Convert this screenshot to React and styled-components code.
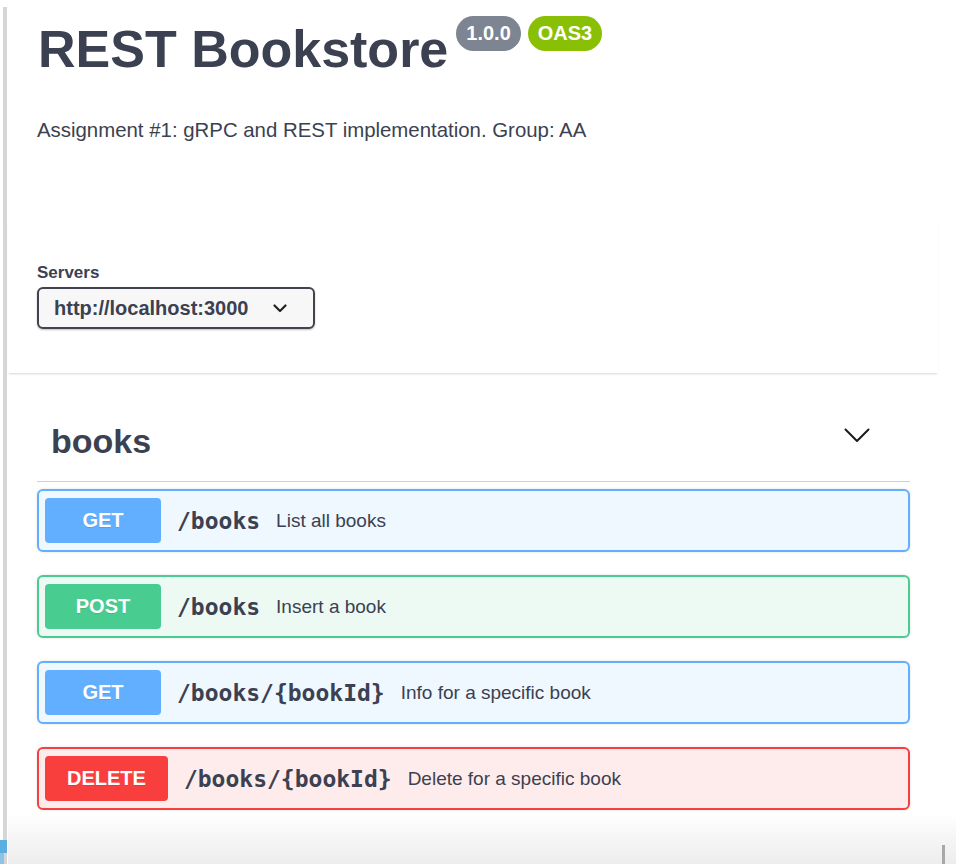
import React from "react";
import styled, { createGlobalStyle } from "styled-components";

const Global = createGlobalStyle`
  html, body { margin: 0; padding: 0; background: #fff; overflow: hidden; }
  body { font-family: "Liberation Sans", Arial, sans-serif; color: #3b4151; }
  * { box-sizing: border-box; }
`;

const Frame = styled.div`
  position: relative;
  margin: 7px 0 0 3px;
  border-left: 4px solid #d6d6d6;
  padding-left: 1px;
  min-height: 857px;
  display: flex;
  flex-direction: column;
`;

const Content = styled.div`
  width: 930px;
  display: flex;
  flex-direction: column;
`;

const Info = styled.div`
  padding: 12px 29px 0 29px;
  display: flex;
  flex-direction: column;
`;

const TitleRow = styled.div`
  display: flex;
  align-items: flex-start;
  gap: 8px;
`;

const Title = styled.h1`
  margin: 0 0 0 1px;
  font-size: 52px;
  line-height: 60px;
  font-weight: 700;
  color: #3b4151;
`;

const Badges = styled.div`
  display: flex;
  gap: 7px;
  margin-top: -3px;
`;

const Badge = styled.span`
  display: inline-block;
  height: 35px;
  line-height: 35px;
  padding: 0 10px;
  border-radius: 18px;
  background: ${(p) => p.$bg};
  color: #fff;
  font-size: 20px;
  font-weight: 700;
`;

const Description = styled.p`
  margin: 37px 0 0 0;
  font-size: 20.4px;
  line-height: 28px;
  color: #3b4151;
`;

const SchemeContainer = styled.div`
  margin-top: 76px;
  padding: 43px 29px 44px 29px;
  background: #fff;
  box-shadow: 0 2px 2px -1px rgba(0, 0, 0, 0.16);
  display: flex;
  flex-direction: column;
  gap: 4px;
`;

const Label = styled.div`
  font-size: 17px;
  line-height: 20px;
  font-weight: 700;
  color: #3b4151;
`;

const Select = styled.div`
  width: 278px;
  height: 42px;
  border: 2px solid #41444e;
  border-radius: 6px;
  background: #f7f7f7;
  box-shadow: 0 1px 2px 0 rgba(0, 0, 0, 0.25);
  display: flex;
  align-items: center;
  padding-left: 15px;
  font-size: 20px;
  font-weight: 700;
  color: #3b4151;
  svg { margin-left: 25px; }
`;

const TagSection = styled.div`
  margin-top: 34px;
  padding: 0 28px 0 29px;
  display: flex;
  flex-direction: column;
`;

const TagHeader = styled.div`
  display: flex;
  align-items: flex-start;
  justify-content: space-between;
  padding: 14px 40px 20px 14px;
  border-bottom: 1px solid #cfd0d4;
  margin-bottom: 7px;
  svg { margin-top: 7px; }
`;

const TagTitle = styled.h3`
  margin: 0;
  font-size: 34px;
  line-height: 40px;
  font-weight: 700;
  color: #3b4151;
`;

const OpList = styled.div`
  display: flex;
  flex-direction: column;
  gap: 23px;
`;

const Op = styled.div`
  display: flex;
  align-items: center;
  height: 63px;
  padding: 0 6px;
  border: 2px solid ${(p) => p.$color};
  border-radius: 6px;
  background: ${(p) => p.$bg};
  box-shadow: 0 0 3px rgba(0, 0, 0, 0.12);
`;

const Method = styled.span`
  min-width: 116px;
  height: 45px;
  padding: 0 22px;
  border-radius: 4px;
  background: ${(p) => p.$color};
  color: #fff;
  font-size: 20px;
  font-weight: 700;
  display: flex;
  align-items: center;
  justify-content: center;
  text-shadow: 0 1px 0 rgba(0, 0, 0, 0.1);
`;

const Path = styled.span`
  margin-left: 16px;
  font-family: "DejaVu Sans Mono", "Liberation Mono", monospace;
  font-size: 23px;
  font-weight: 700;
  color: #3b4151;
`;

const Summary = styled.span`
  margin-left: 16px;
  font-size: 19px;
  color: #3b4151;
`;

const Footer = styled.div`
  margin-top: 3px;
  flex: 1;
  min-height: 40px;
  background: linear-gradient(#ffffff, #f6f6f6 45%, #ededed);
`;

const BlueMark = styled.div`
  position: fixed;
  left: 0;
  top: 840px;
  width: 7px;
  height: 13px;
  background: #5aaee0;
  &::after {
    content: "";
    position: absolute;
    left: 0;
    top: 13px;
    width: 4px;
    height: 11px;
    background: #8cc4e8;
  }
`;

const GrayMark = styled.div`
  position: fixed;
  left: 942px;
  top: 845px;
  width: 3px;
  height: 19px;
  background: #a8a8a8;
`;

const ops = [
  { method: "GET", path: "/books", summary: "List all books", color: "#61affe", bg: "#eff7ff" },
  { method: "POST", path: "/books", summary: "Insert a book", color: "#49cc90", bg: "#edfaf4" },
  { method: "GET", path: "/books/{bookId}", summary: "Info for a specific book", color: "#61affe", bg: "#eff7ff" },
  { method: "DELETE", path: "/books/{bookId}", summary: "Delete for a specific book", color: "#f93e3e", bg: "#feecec" },
];

export default function App() {
  return (
    <>
      <Global />
      <Frame>
        <Content>
          <Info>
            <TitleRow>
              <Title>REST Bookstore</Title>
              <Badges>
                <Badge $bg="#7d8492">1.0.0</Badge>
                <Badge $bg="#89bf04">OAS3</Badge>
              </Badges>
            </TitleRow>
            <Description>Assignment #1: gRPC and REST implementation. Group: AA</Description>
          </Info>
          <SchemeContainer>
            <Label>Servers</Label>
            <Select>
              <span>http://localhost:3000</span>
              <svg width="14" height="9" viewBox="0 0 14 9">
                <polyline points="1.5,1.5 7,7 12.5,1.5" fill="none" stroke="#222" strokeWidth="2.2" strokeLinecap="round" strokeLinejoin="round" />
              </svg>
            </Select>
          </SchemeContainer>
          <TagSection>
            <TagHeader>
              <TagTitle>books</TagTitle>
              <svg width="26" height="15" viewBox="0 0 26 15">
                <polyline points="1.5,1.5 13,13 24.5,1.5" fill="none" stroke="#1b1b1b" strokeWidth="2" strokeLinecap="round" strokeLinejoin="round" />
              </svg>
            </TagHeader>
            <OpList>
              {ops.map((o, i) => (
                <Op key={i} $color={o.color} $bg={o.bg}>
                  <Method $color={o.color}>{o.method}</Method>
                  <Path>{o.path}</Path>
                  <Summary>{o.summary}</Summary>
                </Op>
              ))}
            </OpList>
          </TagSection>
        </Content>
        <Footer />
      </Frame>
      <BlueMark />
      <GrayMark />
    </>
  );
}
